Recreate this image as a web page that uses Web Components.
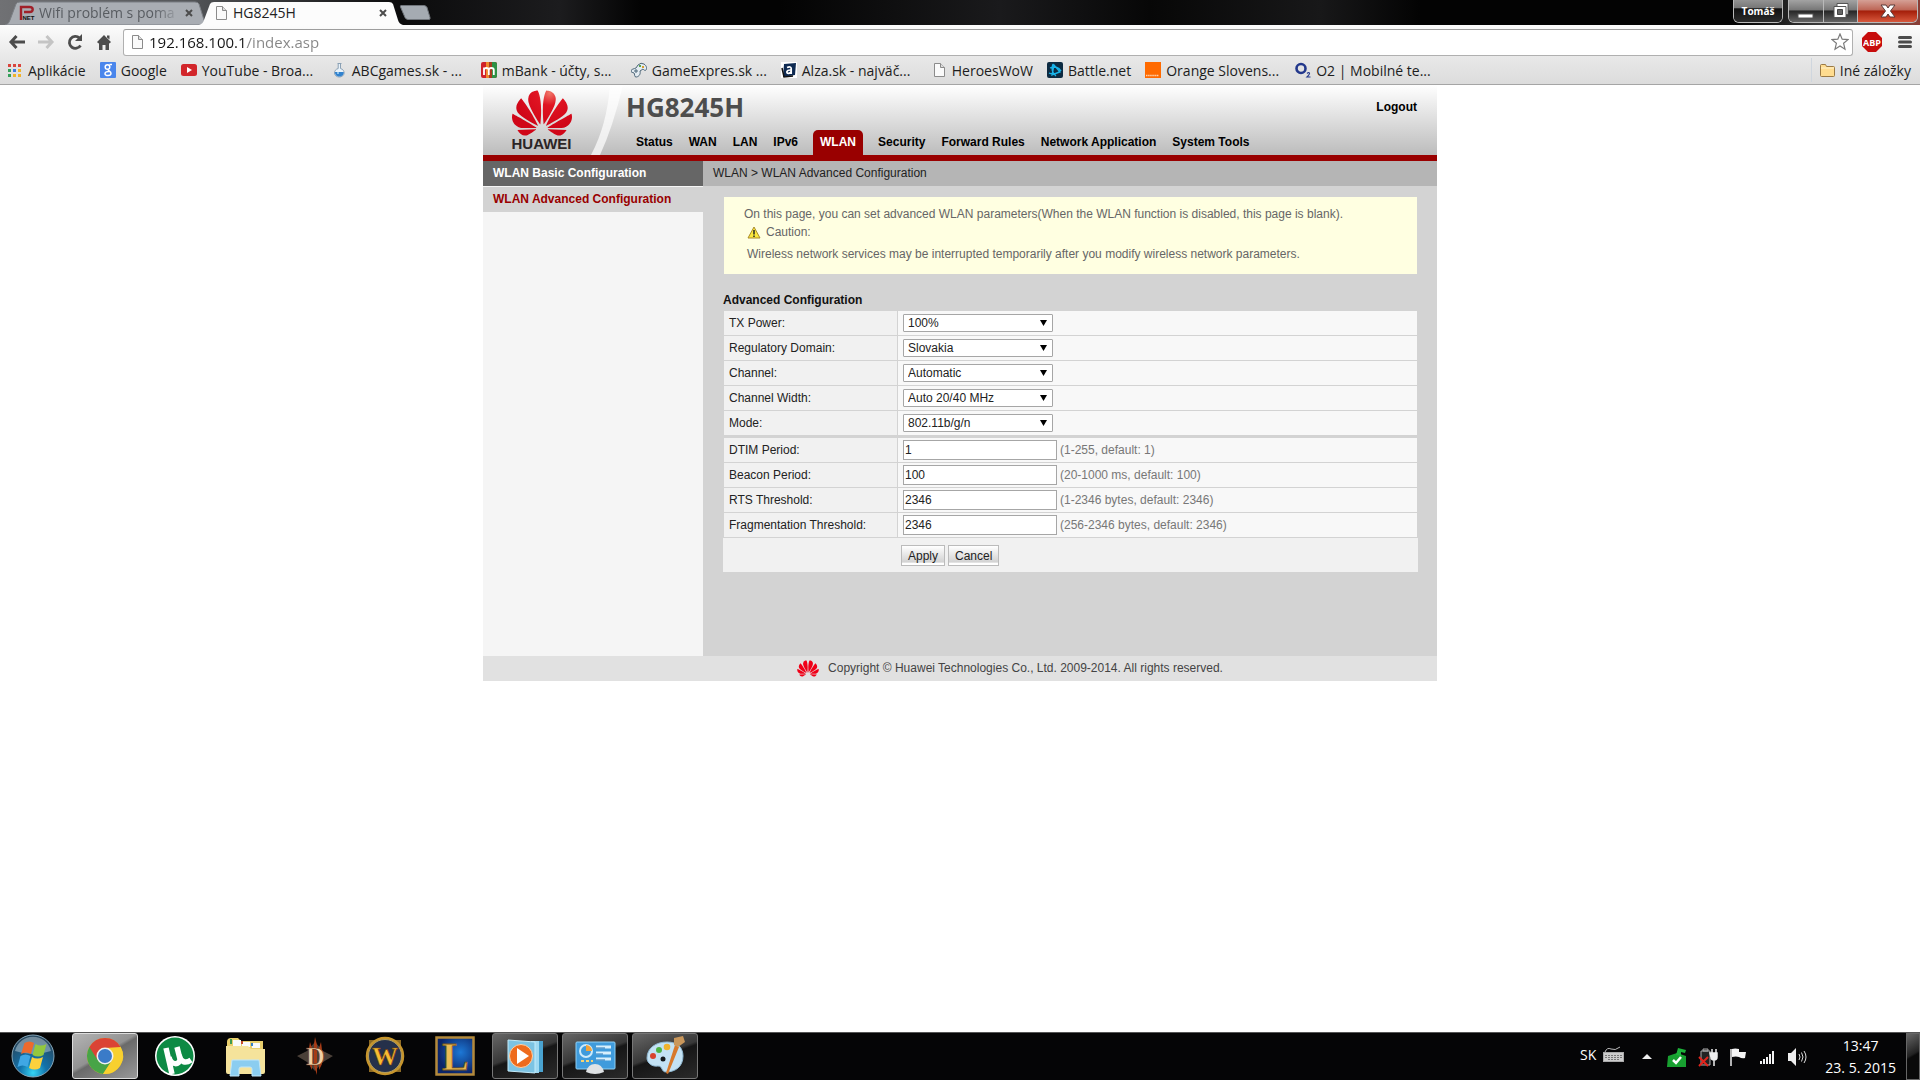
<!DOCTYPE html>
<html lang="sk">
<head>
<meta charset="utf-8">
<title>HG8245H</title>
<style>
  html, body { margin: 0; height: 100%; }
  body { font-family: "Liberation Sans", Arial, sans-serif; font-size: 12px; background: #fff; color: #111; }
</style>
</head>
<body>
<desktop-screen>
  <browser-titlebar slot="top">
    <browser-tab label="Wifi problém s poma" icon="pnet" faded></browser-tab>
    <browser-tab label="HG8245H" icon="page" active></browser-tab>
  </browser-titlebar>
  <browser-toolbar slot="top"></browser-toolbar>
  <bookmark-bar slot="top">
    <bookmark-item icon="apps">Aplikácie</bookmark-item>
    <bookmark-item icon="google">Google</bookmark-item>
    <bookmark-item icon="youtube" wide>YouTube - Broa...</bookmark-item>
    <bookmark-item icon="flask" wide>ABCgames.sk - ...</bookmark-item>
    <bookmark-item icon="mbank" wide>mBank - účty, s...</bookmark-item>
    <bookmark-item icon="gamepad" wide>GameExpres.sk ...</bookmark-item>
    <bookmark-item icon="alza" wide>Alza.sk - najväč...</bookmark-item>
    <bookmark-item icon="page">HeroesWoW</bookmark-item>
    <bookmark-item icon="battle">Battle.net</bookmark-item>
    <bookmark-item icon="orange" wide>Orange Slovens...</bookmark-item>
    <bookmark-item icon="o2" wide>O2 | Mobilné te...</bookmark-item>
    <bookmark-item slot="end" icon="folder">Iné záložky</bookmark-item>
  </bookmark-bar>

  <router-page>
    <router-header slot="header"></router-header>
    <side-menu slot="menu"></side-menu>
    <notice-box></notice-box>
    <config-form heading="Advanced Configuration">
      <config-row label="TX Power:" kind="select" value="100%"></config-row>
      <config-row label="Regulatory Domain:" kind="select" value="Slovakia"></config-row>
      <config-row label="Channel:" kind="select" value="Automatic"></config-row>
      <config-row label="Channel Width:" kind="select" value="Auto 20/40 MHz"></config-row>
      <config-row label="Mode:" kind="select" value="802.11b/g/n" last></config-row>
      <config-row label="DTIM Period:" value="1" hint="(1-255, default: 1)"></config-row>
      <config-row label="Beacon Period:" value="100" hint="(20-1000 ms, default: 100)"></config-row>
      <config-row label="RTS Threshold:" value="2346" hint="(1-2346 bytes, default: 2346)"></config-row>
      <config-row label="Fragmentation Threshold:" value="2346" hint="(256-2346 bytes, default: 2346)"></config-row>
    </config-form>
  </router-page>

  <task-bar slot="bottom">
    <task-button icon="chrome" state="active" name="Chrome"></task-button>
    <task-button icon="utorrent" name="uTorrent"></task-button>
    <task-button icon="explorer" name="Explorer"></task-button>
    <task-button icon="diablo" name="Diablo"></task-button>
    <task-button icon="wow" name="Warcraft"></task-button>
    <task-button icon="lol" name="League"></task-button>
    <task-button icon="wmp" state="open" name="Media Player"></task-button>
    <task-button icon="control" state="open" name="Control Panel"></task-button>
    <task-button icon="paint" state="open" name="Paint"></task-button>
    <system-tray slot="end"></system-tray>
  </task-bar>
</desktop-screen>

<script>
const petals = '<path d="M3.67 6.14S1.82 7.91 1.72 9.78v.35c.08 1.51 1.22 2.4 1.22 2.4 1.83 1.79 6.26 4.04 7.3 4.55 0 0 .06.03.1-.01l.02-.04v-.04C7.52 10.8 3.67 6.14 3.67 6.14zM9.65 18.6c-.02-.08-.1-.08-.1-.08l-7.38.26c.8 1.43 2.15 2.53 3.56 2.2.96-.25 3.16-1.78 3.88-2.3.06-.05.04-.09.04-.09zm.08-.78C6.49 15.63.21 12.28.21 12.28c-.15.46-.2.9-.21 1.3v.07c0 1.07.4 1.82.4 1.82.8 1.69 2.34 2.2 2.34 2.2.7.3 1.4.31 1.4.31.12.02 4.4 0 5.54 0 .05 0 .08-.05.08-.05v-.06c0-.03-.03-.05-.03-.05zM9.06 3.19a3.42 3.42 0 00-2.57 3.15v.41c.03.6.16 1.05.16 1.05.66 2.9 3.86 7.65 4.55 8.65.05.05.1.03.1.03a.1.1 0 00.06-.1c1.06-10.6-1.11-13.42-1.11-13.42-.32.02-1.19.23-1.19.23zm8.3 2.27s-.49-1.8-2.44-2.28c0 0-.57-.14-1.17-.22 0 0-2.18 2.81-1.12 13.43.01.07.06.08.06.08.07.03.1-.03.1-.03.72-1.03 3.9-5.76 4.55-8.64 0 0 .36-1.4.02-2.34zm-2.92 13.07s-.07 0-.09.05c0 0-.01.07.03.1.7.51 2.85 2 3.88 2.3 0 0 .16.05.43.06h.14c.69-.02 1.9-.37 3-2.26l-7.4-.25zm7.83-8.41c.14-2.06-1.94-3.97-1.94-3.98 0 0-3.85 4.66-6.67 10.8 0 0-.03.08.02.13l.04.01h.06c1.06-.53 5.46-2.77 7.28-4.54 0 0 1.15-.93 1.21-2.42zm1.52 2.14s-6.28 3.37-9.52 5.55c0 0-.05.04-.03.11 0 0 .03.06.07.06 1.16 0 5.56 0 5.67-.02 0 0 .57-.02 1.27-.29 0 0 1.56-.5 2.37-2.27 0 0 .73-1.45.17-3.14z"/>';

const small = body => `<svg width="16" height="16" viewBox="0 0 16 16" aria-hidden="true">${body}</svg>`;
const big = body => `<svg width="44" height="44" viewBox="0 0 44 44" aria-hidden="true">${body}</svg>`;
const icons = {
  page: small('<path d="M3.500 1.500h6l4 4v9h-10z" fill="#fafafa" stroke="#8b8b8b"/><path d="M9.500 1.500v4h4" fill="#ddd" stroke="#8b8b8b"/>'),
  pnet: small('<path d="M2 15V2h8.500q3.200 0 3.200 2.500T10.500 7H5" fill="none" stroke="#a02029" stroke-width="2.400"/><text x="3.500" y="15" font-family="Liberation Sans" font-weight="bold" font-size="6" fill="#111">NET</text>'),
  apps: small('<g><path fill="#d9453d" d="M1 2h3v3H1zM6 2h3v3H6zM11 2h3v3h-3z"/><path fill="#35a05a" d="M1 7h3v3H1zM1 12h3v3H1z"/><path fill="#3f7be0" d="M6 7h3v3H6z"/><path fill="#f0b32c" d="M11 7h3v3h-3zM6 12h3v3H6zM11 12h3v3h-3z"/></g>'),
  google: small('<rect width="16" height="16" rx="1" fill="#4a86ec"/><g fill="none" stroke="#fff" stroke-width="1.500"><circle cx="7.500" cy="5" r="2.300"/><path d="M9.500 2.500h2.500M8.500 7.300c-1.500 1.200 2.500 1.700 2.500 4 0 3-6 3-6 .5 0-2 2-2.500 4.500-2.400"/></g>'),
  youtube: small('<rect y="2" width="16" height="12" rx="2.500" fill="#d2262b"/><path d="M6 5v6l5-3z" fill="#fff"/>'),
  flask: small('<path d="M6.500 1.500h4M7.200 2v4.500C4.500 7.300 3.500 9 3.500 11a4.800 4 0 0 0 9.600 0c0-2-1-3.700-3.600-4.500V2" fill="#e9f2f9" stroke="#8aa0b4"/><path d="M4 10h8.700c.5 6-9.200 6-8.700 0z" fill="#3182ce"/><circle cx="7" cy="11" r="1" fill="#a8d6f7"/>'),
  mbank: small('<rect width="16" height="16" rx="2" fill="#d0222a"/><path d="M5 0h3v16H5z" fill="#f08a2c"/><path d="M8 0h3v16H8z" fill="#a93b21"/><path d="M11 0h3q2 0 2 2v12q0 2-2 2h-3z" fill="#2e9145"/><path d="M3 13V5.500M3 8q0-2 2.300-2T7.800 8v5M7.800 8q0-2 2.500-2t2.500 2v5" fill="none" stroke="#fff" stroke-width="1.800"/>'),
  gamepad: small('<path d="M7 3q3-3 6-1c3 2 3 5 2 6s-2 0-3-1l-3 2c1 4-2 6-4 6s-1-3-2-4-3 0-3-2 3-2 5-3z" fill="#e4ecf2" stroke="#4d6678"/><path d="M3 9h4M5 7v4" stroke="#4d6678"/><path d="M8 3h2v2H8z" fill="#58a64c"/><path d="M11 4h2v2h-2z" fill="#d8a032"/>'),
  alza: small('<rect width="16" height="16" fill="#fff"/><path d="M3 2l12-1-1 12-12 2z" fill="#0e2a52"/><path d="M1 6l2 9 9-1" fill="none" stroke="#111" stroke-width="1.500"/><path d="M6 5.500q4-1.500 4.200 1V12M10 8c-5-.3-5 3.600-2.500 3.300 1.500 0 2.500-1.200 2.500-2" fill="none" stroke="#fff" stroke-width="1.700"/>'),
  battle: small('<rect width="16" height="16" rx="2" fill="#0d2b42"/><g fill="none" stroke="#19b4ea" stroke-width="1.300"><path d="M6 2c-2 4-1 9 3 12M2 11c4 2 10 0 12-3M3 6c4-2 9-1 11 3M5 13L7 3l6 7z"/></g>'),
  orange: small('<rect width="16" height="16" fill="#ff6a00"/><path d="M1 13.500h13" stroke="#ffd3ad" stroke-width="1.500" stroke-dasharray="1.500 .6"/>'),
  o2: small('<circle cx="6" cy="6.500" r="4.500" fill="none" stroke="#23388c" stroke-width="2.600"/><path d="M12 11.500q2-2 2.500 0 0 1-2.500 3.500h3.500" fill="none" stroke="#23388c" stroke-width="1.200"/>'),
  folder: small('<path d="M1.500 13.500v-10q0-1 1-1h4l1 2h7q1 0 1 1v8q0 1-1 1h-12q-1 0-1-1z" fill="#ffdc8f" stroke="#9b7a45"/><path d="M2 6h13" stroke="#fff2cb"/>'),
  chrome: big('<circle cx="22" cy="22" r="18" fill="#ddb92d"/><path d="M6.400 13A18 18 0 0 0 20 39.900L29 26l-7-4z" fill="#47a447"/><path d="M22 13h15.600A18 18 0 0 1 20 39.900l10-15z" fill="#f8d02f"/><path d="M22 14l-8 11L6.400 13A18 18 0 0 1 37.600 13z" fill="#db4335"/><circle cx="22" cy="22" r="8.500" fill="#f2f2f2"/><circle cx="22" cy="22" r="7" fill="#3a7bc8"/>'),
  utorrent: big('<circle cx="22" cy="22" r="20" fill="#fff"/><circle cx="22" cy="22" r="18.500" fill="#0d8a44"/><path d="M13 14l6 26M16 23c2 9 11 8 11 2l-3-12M26 21c2 7 6 9 12 5" fill="none" stroke="#fff" stroke-width="5.500"/>'),
  explorer: big('<path d="M4 8q0-4 4-4h7l3 3h22v31H4z" fill="#e9cf6d"/><path d="M10 6h8v6h-8zM19 8h8v5h-8zM29 9h8v5h-8z" fill="#f9fafa"/><path d="M7 5h2v5H7z" fill="#3e9b50"/><path d="M18 7h2v3h-2z" fill="#c44a2e"/><path d="M28 9h2v3h-2z" fill="#3783c9"/><path d="M3 12h22l3 3h14v23q0 2-2 2H5q-2 0-2-2z" fill="#f5e39b"/><path d="M7 42l2-16h27l2 16h-9v-7q0-2-2-2h-9q-2 0-2 2v7z" fill="#8bcdf0" stroke="#bfe6fa"/>'),
  diablo: big('<path d="M4 22l10-5 8-9 8 9 10 5-10 6-8 9-8-9z" fill="#4a4038"/><path d="M17 8l2 6v22l-3-6V14zM22 3l2 8v30l-3-9V10zM28 8l1 8v14l-3 6V14z" fill="#a63b16"/><text x="13" y="31" font-family="Liberation Serif" font-weight="bold" font-size="26" fill="#f0cfa6" stroke="#6a2f14" stroke-width=".6">D</text>'),
  wow: big('<path d="M6 6h32v32H6z" fill="#8d6a24"/><circle cx="22" cy="22" r="18" fill="#25304a" stroke="#c6952d" stroke-width="2.500"/><circle cx="22" cy="22" r="16.500" fill="none" stroke="#f3d574" stroke-width=".6"/><text x="22" y="31" text-anchor="middle" font-family="Liberation Serif" font-weight="bold" font-size="26" fill="#f8bd33" stroke="#7a3d0a" stroke-width=".6">W</text>'),
  lol: big('<defs><radialGradient id="b" cx=".65" cy=".4" r=".6"><stop offset="0" stop-color="#1d78d6"/><stop offset="1" stop-color="#0b2468"/></radialGradient></defs><rect x="3.500" y="3.500" width="37" height="37" fill="url(#b)" stroke="#b48a3c" stroke-width="2.500"/><text x="9" y="36" font-family="Liberation Serif" font-weight="bold" font-size="40" fill="#e8bc55" stroke="#7b561b" stroke-width=".8">L</text>'),
  wmp: big('<path d="M32 7h8v31h-8z" fill="#4aa3d0"/><path d="M28 7h8v32h-8z" fill="#9fd9f2"/><path d="M5 6l27 2v31L5 37z" fill="#7cc3e3" stroke="#c4ebfa"/><circle cx="18" cy="22" r="11.500" fill="#ee6b1d" stroke="#ffd1a6"/><path d="M14 14v16l12-8z" fill="#fff"/>'),
  control: big('<rect x="3" y="8" width="39" height="27" rx="1" fill="#3f9bdc" stroke="#8fd0f5"/><circle cx="13" cy="17" r="6" fill="none" stroke="#cdeafa" stroke-width="2"/><path d="M13 17v-6a6 6 0 0 1 6 6z" fill="#f2a33a"/><path d="M23 13h15M23 19h15M23 25h15" stroke="#d6effc" stroke-width="3"/><path d="M23 14h9M23 20h7M23 26h9" stroke="#2272b4"/><path d="M8 27h12" stroke="#f5d372" stroke-width="2" stroke-dasharray="3 2"/><path d="M13 38q2-8 9-8t9 8q-9 4-18 0z" fill="#dfe2e4"/>'),
  paint: big('<path d="M40 22c0 11-8 16-17 16-5 0-3-6-8-6-6 1-11-3-11-8C4 14 13 8 24 8s16 6 16 14z" fill="#c3e2f4" stroke="#8fb8d2"/><circle cx="20" cy="25" r="2.500" fill="#15191c"/><circle cx="10" cy="22" r="3" fill="#d8432e"/><circle cx="16" cy="16" r="3" fill="#4db244"/><circle cx="24" cy="13" r="3.300" fill="#f1b32d"/><path d="M32 11l4 2-11 27-2-1z" fill="#d7792c"/><path d="M31 4l9-2 2 6-7 5-4-2z" fill="#c9975b"/>')
};

class BaseElement extends HTMLElement {
  connectedCallback() {
    if (this.shadowRoot) return;
    const t = document.createElement('template');
    t.innerHTML = this.view();
    this.attachShadow({ mode: 'open' }).appendChild(t.content.cloneNode(true));
  }
  get(name) { return this.getAttribute(name) || ''; }
}

customElements.define('desktop-screen', class extends BaseElement {
  view() { return `<style>
    :host { display: flex; flex-direction: column; min-height: 100vh; }
    main { flex: 1; }
  </style><slot name="top"></slot><main><slot></slot></main><slot name="bottom"></slot>`; }
});

customElements.define('browser-titlebar', class extends BaseElement {
  view() { return `<style>
    :host { display: flex; align-items: flex-end; height: 25px; padding-left: 5px; color: #fff;
      background: linear-gradient(90deg, #707174 0, #56585b 180px, #0b0b0c 400px, #1c1c1e 560px, #030303 640px, #030303 780px, #1a1a1c 1000px, #070707 1150px, #181819 1320px, #030303 1420px, #030303 1740px, #555 1860px, #8b3d35 100%); }
    .new { width: 32px; height: 15px; margin: 0 0 5px 6px; padding: 0; border: 0; background: none; }
    .new svg { display: block; }
    .controls { display: flex; align-self: flex-start; gap: 5px; margin-left: auto; padding-right: 2px; }
    .group { display: flex; border: 1px solid #b9b9b9; border-top: 0; border-radius: 0 0 6px 6px; overflow: hidden; height: 22px; }
    button { display: grid; place-items: center; border: 0; color: #fff; }
    .group button { width: 34px; padding: 0; background: linear-gradient(#a3a3a3 0, #777 45%, #262626 50%, #646464 100%); }
    .group button + button { border-left: 1px solid #b9b9b9; }
    .group .close { width: 60px; background: linear-gradient(#d5a096 0, #bd6656 45%, #a41e0a 50%, #d8583c 100%); }
    .group .user { width: 48px; font: bold 10px "Open Sans", sans-serif; background: linear-gradient(#929292 0, #777 35%, #111 40%, #2c2c2c 100%); }
  </style><slot></slot>
  <button class="new" aria-label="New tab"><svg width="32" height="15" viewBox="0 0 32 15"><path d="M2 .5h23q2 0 3 2l3 10q.5 2-1 2H9q-2 0-3-2L1.500 2q-.5-1.500.5-1.500z" fill="#a5abb2" stroke="#70757b"/></svg></button>
  <div class="controls">
    <div class="group"><button class="user">Tomáš</button></div>
    <div class="group">
      <button aria-label="Minimize"><svg width="18" height="18"><rect x="1" y="12" width="15" height="4" fill="#fff" stroke="#555"/></svg></button>
      <button aria-label="Restore"><svg width="18" height="18"><path d="M5 1.500h11v11h-2v3H2v-11h3z" fill="#fff" stroke="#555"/><path d="M5.500 7.500h5v5h-5z" fill="#666" stroke="#444"/><path d="M5 4.500h9v8" fill="none" stroke="#555"/></svg></button>
      <button class="close" aria-label="Close"><svg width="18" height="18"><path d="M2 3h5l2 3 2-3h5l-4.500 6 4.500 6h-5l-2-3-2 3H2l4.500-6z" fill="#fff" stroke="#5a3a38"/></svg></button>
    </div>
  </div>`; }
});

customElements.define('browser-tab', class extends BaseElement {
  view() {
    const on = this.hasAttribute('active');
    return `<style>
    :host { display: grid; width: 204px; height: 24px; margin-right: -10px; z-index: ${on ? 2 : 1}; color: ${on ? '#222' : '#585c61'}; }
    :host > * { grid-area: 1 / 1; }
    .shape { width: 100%; height: 24px; }
    .row { display: flex; align-items: center; gap: 4px; padding: 0 14px; min-width: 0; height: 23px; font: 14px "Open Sans", sans-serif; }
    .row > svg { flex: none; }
    .text { flex: 1; white-space: nowrap; }
    :host([faded]) .text { -webkit-mask-image: linear-gradient(90deg, #000 115px, transparent 142px); mask-image: linear-gradient(90deg, #000 115px, transparent 142px); }
    button { width: 12px; height: 12px; padding: 0; border: 0; background: none; }
    button svg { display: block; }
  </style>
  <svg class="shape" viewBox="0 0 204 24" preserveAspectRatio="none"><path d="M0 24q4-1 5-5L11 3q1-2 4-2h175q3 0 4 2l5 16q1 4 5 5z" fill="${on ? '#fcfcfc' : '#a9adb3'}" stroke="${on ? 'none' : '#7b7f84'}"/></svg>
  <div class="row">${icons[this.get('icon')]}<span class="text">${this.get('label')}</span>
  <button aria-label="Close tab"><svg width="12" height="12"><path d="M3 3l6 6M9 3l-6 6" stroke="#4c4c4c" stroke-width="2"/></svg></button></div>`; }
});

customElements.define('browser-toolbar', class extends BaseElement {
  view() { return `<style>
    :host { display: flex; align-items: center; box-sizing: border-box; height: 32px; padding: 2px 7px 0 8px; background: linear-gradient(#fcfcfc, #e8e8e8); }
    button { display: grid; place-items: center; padding: 0; border: 0; background: none; width: 18px; height: 24px; }
    .nav { display: flex; gap: 11px; margin-right: 10px; }
    .omni { flex: 1; display: flex; align-items: center; gap: 4px; box-sizing: border-box; height: 27px; padding: 0 3px 0 5px; background: #fff; border: 1px solid #b0b0b0; border-top-color: #9d9d9d; border-radius: 3px; }
    input { flex: 1; min-width: 0; height: 24px; padding: 0; border: 0; outline: 0; font: 15px/24px "Open Sans", sans-serif; color: #222;
      background: linear-gradient(90deg, #161616 98px, #858585 98px); -webkit-background-clip: text; background-clip: text; -webkit-text-fill-color: transparent; }
    .tools { display: flex; gap: 15px; margin-left: 9px; }
    .tools button { width: 20px; }
    .tools button + button { width: 16px; }
  </style>
  <div class="nav">
    <button aria-label="Back"><svg width="18" height="16"><path d="M8.500 2L3 8l5.500 6M3 8h14" fill="none" stroke="#4c4c4c" stroke-width="3"/></svg></button>
    <button aria-label="Forward"><svg width="18" height="16"><path d="M9.500 2L15 8l-5.500 6M15 8H1" fill="none" stroke="#c4c4c4" stroke-width="3"/></svg></button>
    <button aria-label="Reload"><svg width="18" height="18"><path d="M14.500 12.500A6 6 0 1 1 13.500 5" fill="none" stroke="#4c4c4c" stroke-width="2.800"/><path d="M16 1v7H9z" fill="#4c4c4c"/></svg></button>
    <button aria-label="Home"><svg width="18" height="18"><path d="M9 2l7 7-1.500 1.500-.5-.5v7h-3.500v-5h-3v5H4v-7l-.5.5L2 9z" fill="#4c4c4c"/><path d="M12 2.500h2.500v4L12 4.500z" fill="#4c4c4c"/></svg></button>
  </div>
  <div class="omni">${icons.page}<input aria-label="Address" value="192.168.100.1/index.asp">
    <button aria-label="Bookmark"><svg width="18" height="18"><path d="M9 1l2.200 5.200 5.800.4-4.400 3.700 1.400 5.900L9 13l-5 3.200 1.400-5.900L1 6.600l5.800-.4z" fill="#fff" stroke="#7a7a7a" stroke-width="1.200"/></svg></button></div>
  <div class="tools">
    <button aria-label="Adblock"><svg width="20" height="20"><path d="M6 0h8l6 6v8l-6 6H6l-6-6V6z" fill="#c70d0d"/><text x="10" y="13.500" text-anchor="middle" font-family="Open Sans" font-weight="bold" font-size="9" fill="#fff">ABP</text></svg></button>
    <button aria-label="Menu"><svg width="16" height="16"><path d="M2.500 3.500h11M2.500 8h11M2.500 12.500h11" stroke="#4c4c4c" stroke-width="3" stroke-linecap="round"/></svg></button>
  </div>`; }
});

customElements.define('bookmark-bar', class extends BaseElement {
  view() { return `<style>
    :host { display: flex; align-items: flex-start; justify-content: space-between; box-sizing: border-box; height: 28px; padding: 1px 9px 0 7px; background: linear-gradient(#e8e8e8, #dcdcdc); border-bottom: 1px solid #a5a5a5; }
    div { display: flex; gap: 14px; }
    .end { border-left: 1px solid #cfd6de; padding-left: 7px; }
  </style><div><slot></slot></div><div class="end"><slot name="end"></slot></div>`; }
});

customElements.define('bookmark-item', class extends BaseElement {
  view() { return `<style>
    :host { display: block; }
    :host([wide]) { width: 136px; }
    a { display: flex; align-items: center; gap: 5px; height: 24px; color: #1d1d1d; text-decoration: none; white-space: nowrap; font: 14px "Open Sans", sans-serif; }
    svg { flex: none; }
  </style><a href="#">${icons[this.get('icon')]}<span><slot></slot></span></a>`; }
});

customElements.define('router-page', class extends BaseElement {
  view() { return `<style>
    :host { display: block; max-width: 954px; margin: 0 auto; }
    .body { display: grid; grid-template-columns: 220px 1fr; min-height: 495px; }
    .side { background: #f5f5f5; }
    .content { background: #d3d3d3; }
    .crumb { height: 25px; line-height: 24px; padding-left: 10px; background: #b5b5b5; color: #222; }
    .inner { padding: 11px 19px 84px 20px; }
    footer { display: flex; align-items: center; justify-content: center; gap: 9px; box-sizing: border-box; height: 25px; padding-left: 100px; line-height: 24px; background: #e1e1e1; color: #444; }
    footer span { height: 25px; }
    footer svg { fill: #f00018; }
  </style>
  <slot name="header"></slot>
  <div class="body"><div class="side"><slot name="menu"></slot></div>
  <div class="content"><div class="crumb">WLAN &gt; WLAN Advanced Configuration</div><div class="inner"><slot></slot></div></div></div>
  <footer><svg width="22" height="17" viewBox="0 2.500 24 19">${petals}</svg><span>Copyright © Huawei Technologies Co., Ltd. 2009-2014. All rights reserved.</span></footer>`; }
});

customElements.define('router-header', class extends BaseElement {
  view() {
    const items = ['Status', 'WAN', 'LAN', 'IPv6', 'WLAN', 'Security', 'Forward Rules', 'Network Application', 'System Tools'];
    return `<style>
    :host { display: flex; height: 70px; border-bottom: 6px solid #900; background: linear-gradient(#fff, #bcbcbc); font-weight: bold; }
    .logo { display: flex; flex-direction: column; align-items: center; width: 108px; padding: 5px 0 0 9px; box-sizing: border-box; }
    .logo span { font-size: 15px; line-height: 16px; color: #2b2526; }
    .swoosh { flex: none; }
    .main { flex: 1; display: flex; flex-direction: column; justify-content: space-between; }
    .top { display: flex; justify-content: space-between; align-items: flex-start; padding-right: 20px; }
    h1 { margin: 4px 0 0; font: bold 26px/36px "Open Sans", sans-serif; color: #4d4d4d; }
    a { color: #000; text-decoration: none; }
    .out { margin-top: 14px; line-height: 16px; }
    nav { display: flex; padding-left: 2px; }
    nav a { padding: 0 8px; line-height: 24px; height: 25px; }
    nav .on { margin: 0 7px; padding: 0 7px; color: #fff; background: #900; border-radius: 5px 5px 0 0; }
  </style>
  <div class="logo"><svg width="60" height="46" viewBox="0 2.800 24 18.400"><defs><radialGradient id="g" gradientUnits="userSpaceOnUse" cx="15" cy="4" r="14"><stop offset="0" stop-color="#f0786a"/><stop offset=".35" stop-color="#e01422"/><stop offset="1" stop-color="#d00618"/></radialGradient></defs><g fill="url(#g)">${petals}</g></svg><span>HUAWEI</span></div>
  <svg class="swoosh" width="35" height="70" viewBox="0 0 35 70"><path d="M19 0h13Q22 42 9 70H0Q16 40 19 0z" fill="#fff" opacity=".7"/></svg>
  <div class="main">
    <div class="top"><h1>HG8245H</h1><a class="out" href="#">Logout</a></div>
    <nav>${items.map(i => `<a href="#"${i === 'WLAN' ? ' class="on"' : ''}>${i}</a>`).join('')}</nav>
  </div>`; }
});

customElements.define('side-menu', class extends BaseElement {
  view() { return `<style>
    :host { display: flex; flex-direction: column; gap: 1px; font-weight: bold; }
    a { height: 25px; line-height: 24px; padding-left: 10px; text-decoration: none; color: #fff; background: #666; }
    .on { color: #900; background: #d3d3d3; }
  </style><a href="#">WLAN Basic Configuration</a><a class="on" href="#">WLAN Advanced Configuration</a>`; }
});

customElements.define('notice-box', class extends BaseElement {
  view() { return `<style>
    :host { display: flex; flex-direction: column; box-sizing: border-box; height: 77px; margin-left: 1px; margin-right: 1px; padding: 8px 20px; background: #ffffe1; color: #666; }
    p { margin: 0; line-height: 18px; }
    .caution { display: flex; align-items: center; gap: 5px; padding-left: 3px; }
    .body { margin-top: 4px; padding-left: 3px; }
  </style><p>On this page, you can set advanced WLAN parameters(When the WLAN function is disabled, this page is blank).</p>
  <p class="caution"><svg width="14" height="13"><path d="M7 1l6 11H1z" fill="#fbe83c" stroke="#a98a2a"/><path d="M7 4v4.500M7 9.500V11" stroke="#222" stroke-width="1.500"/></svg>Caution:</p>
  <p class="body">Wireless network services may be interrupted temporarily after you modify wireless network parameters.</p>`; }
});

customElements.define('config-form', class extends BaseElement {
  view() { return `<style>
    :host { display: block; }
    h2 { margin: 17px 0 2px; font-size: 12px; line-height: 18px; color: #111; }
    .rows { margin: 0 1px; }
    .actions { display: flex; gap: 3px; padding: 7px 0 6px 178px; background: #f1f1f1; }
    button { height: 21px; padding: 0 6px; border: 1px solid #bbb; background: linear-gradient(#fff, #d2d2d2 85%, #fff 90%); font: 12px "Liberation Sans", sans-serif; color: #222; }
  </style><form onsubmit="return false"><h2>${this.get('heading')}</h2><div class="rows"><slot></slot></div>
  <div class="actions"><button>Apply</button><button type="button">Cancel</button></div></form>`; }
});

customElements.define('config-row', class extends BaseElement {
  view() {
    const v = this.get('value');
    const control = this.get('kind') === 'select'
      ? `<span class="pick"><select id="c"><option>${v}</option></select><svg width="7" height="6"><path d="M0 0h7L3.500 6z" fill="#000"/></svg></span>`
      : `<input id="c" type="text" value="${v}">`;
    return `<style>
    :host { display: grid; grid-template-columns: 173px 1fr; column-gap: 1px; height: 24px; background: #d3d3d3; border-bottom: 1px solid #d3d3d3; }
    :host([last]) { border-bottom-width: 3px; }
    label, .cell { display: flex; align-items: center; }
    label { padding-left: 5px; background: #f1f1f1; color: #222; }
    .cell { gap: 3px; padding-left: 5px; background: #f8f8f8; color: #777; }
    .pick { display: grid; align-items: center; }
    .pick > * { grid-area: 1 / 1; }
    .pick svg { justify-self: end; margin-right: 6px; pointer-events: none; }
    select, input { box-sizing: border-box; font: 12px "Liberation Sans", sans-serif; color: #222; background: #fff; border: 1px solid #a6a6a6; }
    select { appearance: none; -webkit-appearance: none; width: 150px; height: 18px; padding: 0 4px; border-radius: 1px; }
    input { width: 154px; height: 20px; padding: 0 1px; }
  </style><label for="c">${this.get('label')}</label><div class="cell">${control}<span>${this.get('hint')}</span></div>`; }
});

customElements.define('task-bar', class extends BaseElement {
  view() { return `<style>
    :host { display: flex; box-sizing: border-box; height: 48px; border-top: 1px solid #555; background: #050506; color: #fff; }
    .start { width: 44px; height: 44px; margin: 1px 17px 0 11px; padding: 0; border: 0; background: none; }
    .apps { display: flex; gap: 4px; flex: 1; }
  </style>
  <button class="start" aria-label="Start"><svg width="44" height="44" viewBox="0 0 44 44"><defs><radialGradient id="o" cx=".5" cy=".9" r=".8"><stop offset="0" stop-color="#35d4f4"/><stop offset=".4" stop-color="#1272ab"/><stop offset="1" stop-color="#27485f"/></radialGradient></defs><circle cx="22" cy="22" r="21" fill="url(#o)" stroke="#86a7ba"/><path d="M4 17a18.500 18.500 0 0 1 36 0q-18 6-36 0z" fill="#cfdde6" opacity=".45"/><path d="M13.500 9q5-3 9.500 0l-3 11q-5-3-10 0z" fill="#ee6a2c"/><path d="M24.500 10q5 3 11 0l-3 11q-5 3-11 0z" fill="#93c83e"/><path d="M9.500 22q5-3 10 0l-3 11q-5-3-10 0z" fill="#3fa7e4"/><path d="M21 23q5 3 11 0l-3 11q-5 3-11 0z" fill="#fbd13c"/></svg></button>
  <div class="apps"><slot></slot></div><slot name="end"></slot>`; }
});

customElements.define('task-button', class extends BaseElement {
  view() { return `<style>
    :host { display: block; }
    button { display: grid; place-items: center; box-sizing: border-box; width: 66px; height: 46px; padding: 0; border: 1px solid transparent; border-radius: 3px; background: none; }
    :host([state="open"]) button { border-color: #777; background: linear-gradient(160deg, #666 0, #383838 45%, #161616 50%, #2a2a2a 100%); }
    :host([state="active"]) button { border-color: #ddd; background: linear-gradient(150deg, #b4b4b4 0, #929292 45%, #6a6a6a 50%, #999 100%); }
  </style><button aria-label="${this.get('name')}">${icons[this.get('icon')]}</button>`; }
});

customElements.define('system-tray', class extends BaseElement {
  view() { return `<style>
    :host { display: flex; align-items: center; font: 14px/22px "Open Sans", sans-serif; }
    .lang { margin: 0 7px 4px 0; }
    svg { display: block; }
    .kb { margin: 0 14px 6px 0; }
    .icons { display: flex; align-items: center; gap: 11px; margin-right: 18px; }
    time { text-align: center; margin-right: 10px; }
    .peek { width: 14px; height: 47px; padding: 0; border: 1px solid #666; background: linear-gradient(150deg, #666, #222 45%, #0a0a0a 50%); }
  </style>
  <span class="lang">SK</span>
  <svg class="kb" width="21" height="16"><rect x=".5" y="6.500" width="20" height="9" fill="#ccc" stroke="#aaa"/><path d="M2 9.500h17M2 11.500h17M5 13.500h11" stroke="#777" stroke-dasharray="2 1"/><path d="M2 6q2-5 6-3t9-2" fill="none" stroke="#bbb"/></svg>
  <div class="icons">
    <svg width="18" height="18"><path d="M4 11h10L9 6z" fill="#eee"/></svg>
    <svg width="20" height="20"><path d="M1 9l9-3 9 3v11H0z" fill="#18a030"/><path d="M9 8l2-7 8 2-1 3-4-1v4z" fill="#1db33a"/><path d="M6 13l3 3 5-6" fill="none" stroke="#fff" stroke-width="2.500"/></svg>
    <svg width="20" height="20"><path d="M3 4h9v14H3zM5 2h5v2H5z" fill="#222" stroke="#aaa"/><path d="M12 6h7v4q0 3-3 3t-3-3zM16 12v7M14 2v4M18 2v4" fill="#eee" stroke="#eee" stroke-width="1.500"/><path d="M1 10l9 9M10 10l-9 9" stroke="#e3241c" stroke-width="2"/></svg>
    <svg width="18" height="20"><path d="M2 2v17" stroke="#eee" stroke-width="1.500"/><path d="M3 2q3-1 7 0v3h7l-1 6q-3 1-6-1-3-1-7 0z" fill="#f4f4f4"/></svg>
    <svg width="18" height="18"><path d="M3 13v3M6 11v5M9 9v7M12 6v10M15 3v13" stroke="#f2f2f2" stroke-width="2"/></svg>
    <svg width="20" height="20"><path d="M1 6h3l5-5v18l-5-5H1z" fill="#eee"/><path d="M12 7q2 3 0 6M14.500 5.500q3 4.500 0 9M17 4q4 6 0 12" fill="none" stroke="#ddd"/></svg>
  </div>
  <time>13:47<br>23. 5. 2015</time><button class="peek" aria-label="Show desktop"></button>`; }
});
</script>
</body>
</html>
